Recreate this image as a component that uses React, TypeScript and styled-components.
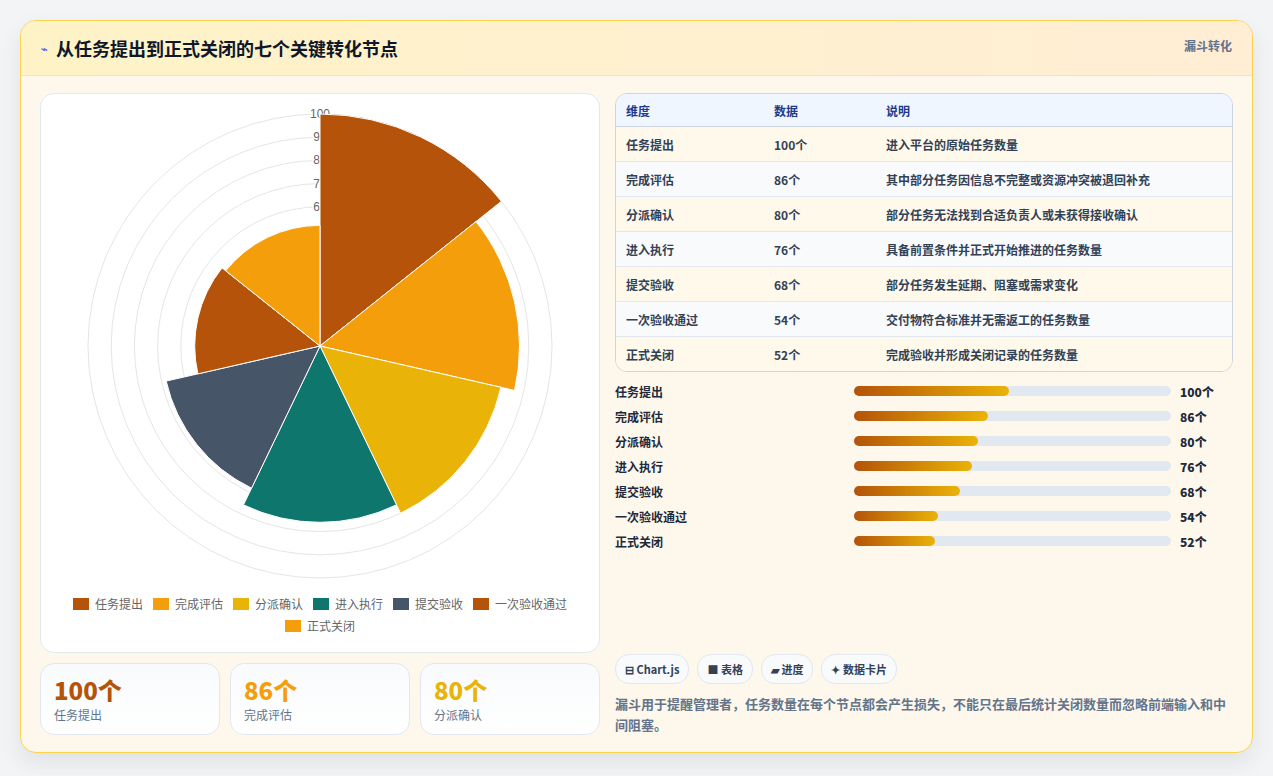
import React from "react";
import styled, { createGlobalStyle } from "styled-components";

const GlobalStyle = createGlobalStyle`
  html, body { margin: 0; padding: 0; background: #f3f4f6; }
  body { font-family: "Noto Sans CJK SC", "Noto Sans", sans-serif; color: #334155; }
`;

const stages = [
  { name: "任务提出", value: 100, color: "#b45309", note: "进入平台的原始任务数量" },
  { name: "完成评估", value: 86, color: "#f59e0b", note: "其中部分任务因信息不完整或资源冲突被退回补充" },
  { name: "分派确认", value: 80, color: "#eab308", note: "部分任务无法找到合适负责人或未获得接收确认" },
  { name: "进入执行", value: 76, color: "#0f766e", note: "具备前置条件并正式开始推进的任务数量" },
  { name: "提交验收", value: 68, color: "#475569", note: "部分任务发生延期、阻塞或需求变化" },
  { name: "一次验收通过", value: 54, color: "#b45309", note: "交付物符合标准并无需返工的任务数量" },
  { name: "正式关闭", value: 52, color: "#f59e0b", note: "完成验收并形成关闭记录的任务数量" },
];

const Page = styled.div`
  padding: 20px 20px 22px 20px;
`;

const Card = styled.div`
  border: 1px solid #fcd34d;
  border-radius: 16px;
  background: #fef8ec;
  box-shadow: 0 10px 24px rgba(0, 0, 0, 0.08);
  overflow: hidden;
`;

const Header = styled.div`
  height: 54px;
  display: flex;
  align-items: center;
  justify-content: space-between;
  padding: 0 20px;
  background: linear-gradient(90deg, #fef3c7, #ffedd5);
  border-bottom: 1px solid #e8e3d6;
`;

const Title = styled.h1`
  margin: 0;
  font-size: 18px;
  font-weight: 700;
  color: #0f172a;
  display: flex;
  align-items: center;
  gap: 8px;
`;

const Bolt = styled.span`
  font-size: 11px;
  color: #6366f1;
`;

const Tag = styled.span`
  font-size: 12px;
  font-weight: 700;
  color: #64748b;
  align-self: flex-start;
  margin-top: 16px;
`;

const Body = styled.div`
  display: grid;
  grid-template-columns: 560px 1fr;
  gap: 15px;
  padding: 17px 19px 17px 19px;
`;

const Column = styled.div`
  display: flex;
  flex-direction: column;
`;

const ChartPanel = styled.div`
  height: 558px;
  background: #fff;
  border: 1px solid #e2e8f0;
  border-radius: 14px;
  display: flex;
  flex-direction: column;
  align-items: center;
`;

const Legend = styled.div`
  display: flex;
  flex-wrap: wrap;
  justify-content: center;
  gap: 5px 10px;
  width: 540px;
  margin-top: 14px;
`;

const LegendItem = styled.span`
  display: flex;
  align-items: center;
  gap: 6px;
  font-size: 12px;
  color: #666;
`;

const Swatch = styled.i<{ $c: string }>`
  width: 16px;
  height: 12px;
  background: ${(p) => p.$c};
  display: inline-block;
`;

const Stats = styled.div`
  display: grid;
  grid-template-columns: repeat(3, 1fr);
  gap: 10px;
  margin-top: 10px;
`;

const Stat = styled.div`
  height: 72px;
  box-sizing: border-box;
  border: 1px solid #e2e8f0;
  border-radius: 14px;
  background: linear-gradient(180deg, #f8fafc, #ffffff);
  padding: 10px 13px;
`;

const StatValue = styled.div<{ $c: string }>`
  font-size: 24px;
  font-weight: 800;
  line-height: 32px;
  color: ${(p) => p.$c};
`;

const StatLabel = styled.div`
  font-size: 12px;
  color: #64748b;
`;

const Table = styled.table`
  width: 100%;
  border-collapse: separate;
  border-spacing: 0;
  border: 1px solid #cbd5e1;
  border-radius: 12px;
  overflow: hidden;
  font-size: 12px;
`;

const Th = styled.th`
  text-align: left;
  background: #eff6ff;
  color: #1e3a8a;
  font-weight: 700;
  height: 32px;
  padding: 0 10px;
  border-bottom: 1px solid #cbd5e1;
`;

const Tr = styled.tr<{ $alt: boolean }>`
  background: ${(p) => (p.$alt ? "#f8fafc" : "#fef9ea")};
`;

const Td = styled.td<{ $last: boolean }>`
  height: 34px;
  padding: 0 10px;
  font-weight: 600;
  color: #334155;
  border-bottom: ${(p) => (p.$last ? "none" : "1px solid #e2e8f0")};
`;

const Bars = styled.div`
  display: flex;
  flex-direction: column;
  gap: 7px;
  margin-top: 10px;
`;

const BarRow = styled.div`
  display: grid;
  grid-template-columns: 230px 317px 1fr;
  align-items: center;
  gap: 9px;
  height: 18px;
  font-size: 12px;
  font-weight: 600;
  color: #1e293b;
`;

const Track = styled.div`
  height: 10px;
  border-radius: 5px;
  background: #e2e8f0;
`;

const Fill = styled.div`
  height: 100%;
  border-radius: 5px;
  background: linear-gradient(90deg, #b45309, #eab308);
`;

const BarValue = styled.span`
  font-weight: 800;
  color: #1e293b;
`;

const Chips = styled.div`
  display: flex;
  gap: 8px;
  margin-top: auto;
`;

const Chip = styled.span`
  display: flex;
  align-items: center;
  gap: 3px;
  height: 28px;
  padding: 0 9px;
  border: 1px solid #e2e8f0;
  border-radius: 14px;
  background: #f8fafc;
  font-size: 11px;
  font-weight: 700;
  color: #334155;
`;

const Note = styled.p`
  margin: 9px 0 0 0;
  font-size: 13px;
  line-height: 21px;
  font-weight: 600;
  color: #64748b;
`;

function PolarChart() {
  const cx = 279;
  const cy = 251;
  const R = 232;
  const step = (2 * Math.PI) / stages.length;
  const pt = (r: number, a: number) => `${cx + r * Math.cos(a)},${cy + r * Math.sin(a)}`;
  return (
    <svg width="558" height="486" style={{ marginTop: 1 }}>
      {Array.from({ length: 10 }, (_, i) => (
        <circle key={i} cx={cx} cy={cy} r={(R * (i + 1)) / 10} fill="none" stroke="#e5e5e5" />
      ))}
      {[100, 90, 80, 70, 60, 50].map((t) => (
        <text key={t} x={cx} y={cy - (R * t) / 100 + 4} textAnchor="middle" fontSize="12"
          fill="#666" fontFamily="Liberation Sans, sans-serif" stroke="#fff" strokeWidth="3" paintOrder="stroke">
          {t}
        </text>
      ))}
      {stages.map((s, i) => {
        const a0 = -Math.PI / 2 + i * step;
        const a1 = a0 + step;
        const r = (R * s.value) / 100;
        return (
          <path key={i} fill={s.color} stroke="#fff" strokeWidth="1"
            d={`M${cx},${cy} L${pt(r, a0)} A${r},${r} 0 0 1 ${pt(r, a1)} Z`} />
        );
      })}
    </svg>
  );
}

export default function App() {
  return (
    <Page>
      <GlobalStyle />
      <Card>
        <Header>
          <Title>
            <Bolt>⌁</Bolt>从任务提出到正式关闭的七个关键转化节点
          </Title>
          <Tag>漏斗转化</Tag>
        </Header>
        <Body>
          <Column>
            <ChartPanel>
              <PolarChart />
              <Legend>
                {stages.map((s) => (
                  <LegendItem key={s.name}>
                    <Swatch $c={s.color} />
                    {s.name}
                  </LegendItem>
                ))}
              </Legend>
            </ChartPanel>
            <Stats>
              {stages.slice(0, 3).map((s) => (
                <Stat key={s.name}>
                  <StatValue $c={s.color}>{s.value}个</StatValue>
                  <StatLabel>{s.name}</StatLabel>
                </Stat>
              ))}
            </Stats>
          </Column>
          <Column>
            <Table>
              <thead>
                <tr>
                  <Th style={{ width: 128 }}>维度</Th>
                  <Th style={{ width: 92 }}>数据</Th>
                  <Th>说明</Th>
                </tr>
              </thead>
              <tbody>
                {stages.map((s, i) => (
                  <Tr key={s.name} $alt={i % 2 === 1}>
                    <Td $last={i === stages.length - 1}>{s.name}</Td>
                    <Td $last={i === stages.length - 1}>{s.value}个</Td>
                    <Td $last={i === stages.length - 1}>{s.note}</Td>
                  </Tr>
                ))}
              </tbody>
            </Table>
            <Bars>
              {stages.map((s) => (
                <BarRow key={s.name}>
                  <span>{s.name}</span>
                  <Track>
                    <Fill style={{ width: `${s.value * 0.49}%` }} />
                  </Track>
                  <BarValue>{s.value}个</BarValue>
                </BarRow>
              ))}
            </Bars>
            <Chips>
              <Chip>⊟ Chart.js</Chip>
              <Chip>■ 表格</Chip>
              <Chip>▰ 进度</Chip>
              <Chip>✦ 数据卡片</Chip>
            </Chips>
            <Note>
              漏斗用于提醒管理者，任务数量在每个节点都会产生损失，不能只在最后统计关闭数量而忽略前端输入和中间阻塞。
            </Note>
          </Column>
        </Body>
      </Card>
    </Page>
  );
}
